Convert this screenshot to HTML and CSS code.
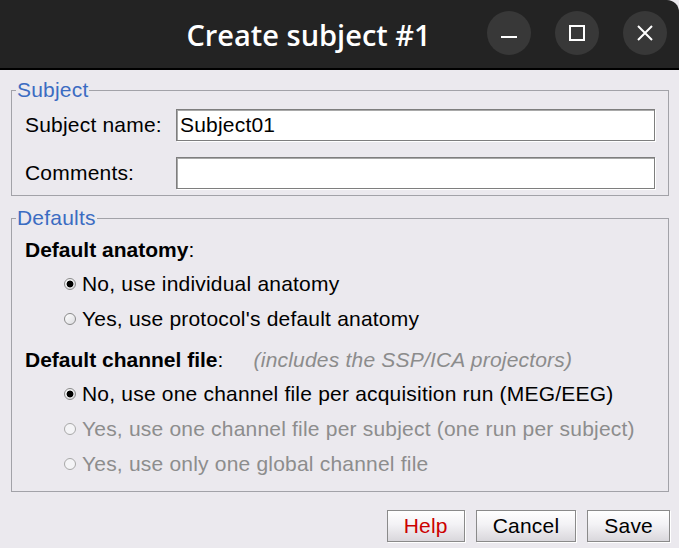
FILE: index.html
```html
<!DOCTYPE html>
<html lang="en">
<head>
<meta charset="utf-8">
<title>Create subject #1</title>
<link rel="stylesheet" href="styles.css">
</head>
<body>
<div class="window">
  <header class="titlebar">
    <div class="title">Create subject #1</div>
    <div class="controls">
      <span class="wbtn" aria-label="Minimize">
        <svg width="16" height="16" viewBox="0 0 16 16"><rect x="0" y="11" width="16" height="2" fill="#fff"/></svg>
      </span>
      <span class="wbtn" aria-label="Maximize">
        <svg width="16" height="16" viewBox="0 0 16 16"><rect x="1" y="1" width="14" height="14" fill="none" stroke="#fff" stroke-width="2"/></svg>
      </span>
      <span class="wbtn" aria-label="Close">
        <svg width="16" height="16" viewBox="0 0 16 16"><path d="M1 1 L15 15 M15 1 L1 15" stroke="#fff" stroke-width="2" fill="none"/></svg>
      </span>
    </div>
  </header>
  <main class="content">
    <fieldset class="group subject">
      <legend>Subject</legend>
      <div class="field-row">
        <label class="field-label" for="sname">Subject name:</label>
        <input id="sname" class="field" type="text" value="Subject01">
      </div>
      <div class="field-row">
        <label class="field-label" for="comments">Comments:</label>
        <input id="comments" class="field" type="text" value="">
      </div>
    </fieldset>
    <fieldset class="group defaults">
      <legend>Defaults</legend>
      <div class="heading"><b>Default anatomy</b>:</div>
      <div class="opt"><span class="radio checked"></span>No, use individual anatomy</div>
      <div class="opt"><span class="radio"></span>Yes, use protocol's default anatomy</div>
      <div class="heading second"><b>Default channel file</b>:<span class="note">(includes the SSP/ICA projectors)</span></div>
      <div class="opt"><span class="radio checked"></span>No, use one channel file per acquisition run (MEG/EEG)</div>
      <div class="opt disabled"><span class="radio"></span>Yes, use one channel file per subject <span class="gap">(one run per subject)</span></div>
      <div class="opt disabled"><span class="radio"></span>Yes, use only one global channel file</div>
    </fieldset>
    <div class="actions">
      <button class="btn help" type="button">Help</button>
      <button class="btn" type="button">Cancel</button>
      <button class="btn" type="button">Save</button>
    </div>
  </main>
</div>
</body>
</html>
```

FILE: styles.css
```css
html, body {
  margin: 0;
  padding: 0;
  background: #e6e6e6;
}

.window {
  width: 679px;
  height: 548px;
  display: flex;
  flex-direction: column;
  background: #ebe9ee;
  font-family: "Liberation Sans", Arial, sans-serif;
  font-size: 21px;
  letter-spacing: 0.2px;
  color: #000;
  overflow: hidden;
}

.titlebar {
  height: 68px;
  flex: none;
  display: flex;
  align-items: center;
  background: #232323;
  border-bottom: 2px solid #000;
  border-top-right-radius: 12px;
}

.title {
  flex: 1;
  text-align: center;
  padding-left: 130px;
  color: #fff;
  font-family: "Open Sans", "DejaVu Sans", sans-serif;
  font-weight: 600;
  font-size: 29px;
  letter-spacing: 0;
  white-space: nowrap;
}

.controls {
  display: flex;
  gap: 24px;
  padding-right: 12px;
  margin-top: -2px;
}

.wbtn {
  width: 44px;
  height: 44px;
  border-radius: 50%;
  background: #383838;
  display: flex;
  align-items: center;
  justify-content: center;
}

.content {
  flex: 1;
  display: flex;
  flex-direction: column;
}

.group {
  margin: 0 10px 0 11px;
  padding: 0;
  border: 1px solid #a2a2a8;
  min-width: 0;
}

.group legend {
  margin-left: 4px;
  padding: 0 1px;
  color: #3b6cc2;
  line-height: 20px;
  font-size: 21px;
}

.subject {
  margin-top: 10px;
  padding: 9px 0 6px;
}

.field-row {
  display: flex;
  align-items: center;
  height: 32px;
}

.field-row + .field-row {
  margin-top: 16px;
}

.field-label {
  width: 164px;
  padding-left: 13px;
  box-sizing: border-box;
  flex: none;
}

.field {
  width: 479px;
  height: 32px;
  box-sizing: border-box;
  margin: 0;
  padding: 0 0 0 3px;
  border: 1px solid #7e7e7e;
  box-shadow: inset 1px 1px 0 #a9a9a9, 1px 1px 0 #fff;
  background: #fff;
  font-family: "Liberation Sans", Arial, sans-serif;
  font-size: 21px;
  letter-spacing: 0.2px;
  color: #000;
  outline: none;
}

.defaults {
  margin-top: 12px;
  padding: 5px 0 10px;
}

.heading {
  height: 33px;
  line-height: 33px;
  padding-left: 13px;
  white-space: nowrap;
}

.heading b {
  letter-spacing: 0;
}

.heading.second {
  margin-top: 7px;
}

.heading .note {
  margin-left: 30px;
  font-style: italic;
  color: #8c8c8c;
}

.opt {
  height: 35px;
  display: flex;
  align-items: center;
  padding-left: 52px;
  white-space: pre;
}

.opt.disabled {
  color: #8d8d8d;
}

.radio {
  width: 12px;
  height: 12px;
  box-sizing: border-box;
  border-radius: 50%;
  border: 1px solid #8a8a8a;
  background: linear-gradient(135deg, #ffffff, #dcdce0);
  margin-right: 6px;
  flex: none;
}

.radio.checked {
  background: radial-gradient(circle, #000 0 3px, #444 3.2px, transparent 3.8px), linear-gradient(135deg, #ffffff, #d4d4d8);
}

.opt.disabled .radio {
  border-color: #a8a8a8;
  background: #f4f4f6;
}

.actions {
  display: flex;
  justify-content: flex-end;
  gap: 11px;
  margin-top: 18px;
  padding-right: 9px;
}

.btn {
  height: 32px;
  margin: 0;
  padding: 0 16px;
  border: 1px solid #8a8a8a;
  box-shadow: 1px 1px 0 #fff;
  background: linear-gradient(to bottom, #ffffff 0%, #f3f2f5 45%, #d9d7dc 100%);
  font-family: "Liberation Sans", Arial, sans-serif;
  font-size: 21px;
  letter-spacing: 0.2px;
  color: #000;
  line-height: 30px;
}

.btn.help {
  color: #cc0000;
}
```
